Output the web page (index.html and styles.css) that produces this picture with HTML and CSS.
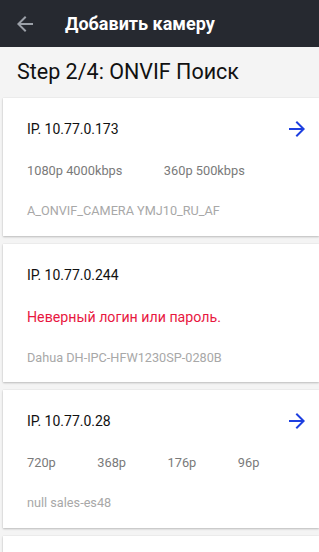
FILE: index.html
```html
<!DOCTYPE html>
<html>
<head>
<meta charset="utf-8">
<link rel="stylesheet" href="styles.css">
</head>
<body>
<header class="appbar">
  <svg class="back" viewBox="0 0 24 24" width="24" height="24"><path d="M20 11H7.83l5.59-5.59L12 4l-8 8 8 8 1.41-1.41L7.83 13H20v-2z" fill="currentColor"/></svg>
  <h1 class="appbar-title">Добавить камеру</h1>
</header>
<div class="step">Step 2/4: ONVIF Поиск</div>
<main class="list">
  <section class="card">
    <div class="card-head">
      <span class="ip">IP. 10.77.0.173</span>
      <svg class="go" viewBox="0 0 24 24" width="24" height="24"><path d="M12 4l-1.41 1.41L16.17 11H4v2h12.17l-5.58 5.59L12 20l8-8z" fill="currentColor"/></svg>
    </div>
    <div class="streams"><span>1080p 4000kbps</span><span>360p 500kbps</span></div>
    <div class="model">A_ONVIF_CAMERA YMJ10_RU_AF</div>
  </section>
  <section class="card">
    <div class="card-head">
      <span class="ip">IP. 10.77.0.244</span>
    </div>
    <div class="error">Неверный логин или пароль.</div>
    <div class="model">Dahua DH-IPC-HFW1230SP-0280B</div>
  </section>
  <section class="card">
    <div class="card-head">
      <span class="ip">IP. 10.77.0.28</span>
      <svg class="go" viewBox="0 0 24 24" width="24" height="24"><path d="M12 4l-1.41 1.41L16.17 11H4v2h12.17l-5.58 5.59L12 20l8-8z" fill="currentColor"/></svg>
    </div>
    <div class="streams"><span>720p</span><span>368p</span><span>176p</span><span>96p</span></div>
    <div class="model">null sales-es48</div>
  </section>
  <section class="card card-partial"></section>
</main>
</body>
</html>
```
FILE: styles.css
```css
html, body {
  margin: 0;
  padding: 0;
}
body {
  background: #f4f4f4;
  font-family: Roboto, "Noto Sans", sans-serif;
  width: 319px;
  height: 552px;
  overflow: hidden;
}
.appbar {
  height: 47px;
  background: #262930;
  display: flex;
  align-items: center;
  padding-left: 13px;
  box-sizing: border-box;
}
.back {
  color: #9ba0a8;
  flex: none;
}
.appbar-title {
  margin: 0 0 0 28px;
  color: #fff;
  font-size: 18px;
  font-weight: 700;
  letter-spacing: 0;
}
.step {
  height: 50px;
  box-sizing: border-box;
  padding: 12px 0 0 17px;
  font-size: 21.5px;
  line-height: 26px;
  color: #111;
}
.list {
  display: flex;
  flex-direction: column;
  gap: 8px;
  padding-top: 1px;
}
.card {
  margin-left: 3px;
  height: 138px;
  box-sizing: border-box;
  background: #fff;
  box-shadow: 0 1px 2px rgba(0,0,0,0.22), 0 0 1px rgba(0,0,0,0.12);
  padding: 20px 10px 0 24px;
  flex: none;
}
.card-partial {
  height: 16px;
  padding: 0;
}
.card-head {
  display: flex;
  align-items: center;
  justify-content: space-between;
  height: 22px;
}
.ip {
  font-size: 14px;
  line-height: 22px;
  color: #111;
}
.go {
  color: #1d3fe0;
  flex: none;
}
.streams {
  margin-top: 21px;
  display: flex;
  gap: 41.5px;
  font-size: 12.8px;
  line-height: 20px;
  color: #7a7a7a;
}
.error {
  margin-top: 20px;
  font-size: 14.2px;
  line-height: 22px;
  color: #e8173f;
}
.model {
  margin-top: 20px;
  font-size: 12.7px;
  line-height: 20px;
  color: #a8a8a8;
}
```
